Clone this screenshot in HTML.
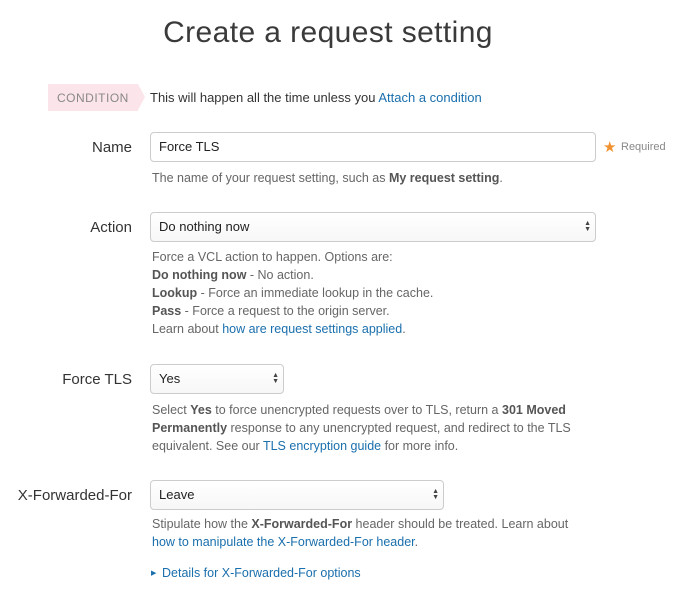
<!DOCTYPE html><html><head><style>
body{margin:0;width:682px;height:604px;background:#fff;font-family:"Liberation Sans",sans-serif;position:relative;overflow:hidden;color:#333}
.a{position:absolute;white-space:nowrap}
h1{position:absolute;left:0;width:656px;text-align:center;top:16px;margin:0;font-weight:normal;font-size:30px;color:#3a3a3a;letter-spacing:.4px}
.lbl{position:absolute;right:550px;font-size:15px;color:#333}
.box{position:absolute;border:1px solid #ccc;border-radius:4px;box-sizing:border-box;font-size:13px;color:#222;padding-left:8px;background:#fff}
.sel{background:linear-gradient(#fff,#f7f7f7)}
.arr{position:absolute;right:4px;top:50%;transform:translateY(-50%);font-size:7px;line-height:6px;color:#444}
.help{position:absolute;left:152px;font-size:12.5px;color:#666;line-height:18px}
.help b{color:#555}
a,.lk{color:#1a6fad;text-decoration:none}
</style></head><body>
<h1>Create a request setting</h1>
<div class="a" style="left:48px;top:84px;width:90px;height:27px;background:#fbe4ea"></div>
<div class="a" style="left:138px;top:84px;width:0;height:0;border-top:13.5px solid transparent;border-bottom:13.5px solid transparent;border-left:7px solid #fbe4ea"></div>
<div class="a" style="left:57px;top:91px;font-size:12px;color:#888;letter-spacing:.5px">CONDITION</div>
<div class="a" style="left:150px;top:90px;font-size:13px;color:#333">This will happen all the time unless you <span class="lk">Attach a condition</span></div>

<div class="lbl" style="top:139px">Name</div>
<div class="box" style="left:150px;top:132px;width:446px;height:30px;line-height:28px">Force TLS</div>
<div class="a" style="left:603px;top:138px;color:#f0922f;font-size:15px">★</div>
<div class="a" style="left:621px;top:141px;font-size:11px;color:#888">Required</div>
<div class="help" style="top:169px">The name of your request setting, such as <b>My request setting</b>.</div>

<div class="lbl" style="top:219px">Action</div>
<div class="box sel" style="left:150px;top:212px;width:446px;height:30px;line-height:28px">Do nothing now<div class="arr">▲<br>▼</div></div>
<div class="help" style="top:248px">Force a VCL action to happen. Options are:<br><b>Do nothing now</b> - No action.<br><b>Lookup</b> - Force an immediate lookup in the cache.<br><b>Pass</b> - Force a request to the origin server.<br>Learn about <span class="lk">how are request settings applied</span>.</div>

<div class="lbl" style="top:371px">Force TLS</div>
<div class="box sel" style="left:150px;top:364px;width:134px;height:30px;line-height:28px">Yes<div class="arr">▲<br>▼</div></div>
<div class="help" style="top:401px">Select <b>Yes</b> to force unencrypted requests over to TLS, return a <b>301 Moved</b><br><b>Permanently</b> response to any unencrypted request, and redirect to the TLS<br>equivalent. See our <span class="lk">TLS encryption guide</span> for more info.</div>

<div class="lbl" style="top:487px">X-Forwarded-For</div>
<div class="box sel" style="left:150px;top:480px;width:294px;height:30px;line-height:28px">Leave<div class="arr">▲<br>▼</div></div>
<div class="help" style="top:515px">Stipulate how the <b>X-Forwarded-For</b> header should be treated. Learn about<br><span class="lk">how to manipulate the X-Forwarded-For header</span>.</div>
<div class="a" style="left:151px;top:569px;font-size:7px;color:#1a6fad">▶</div>
<div class="a lk" style="left:162px;top:566px;font-size:12.5px">Details for X-Forwarded-For options</div>
</body></html>
